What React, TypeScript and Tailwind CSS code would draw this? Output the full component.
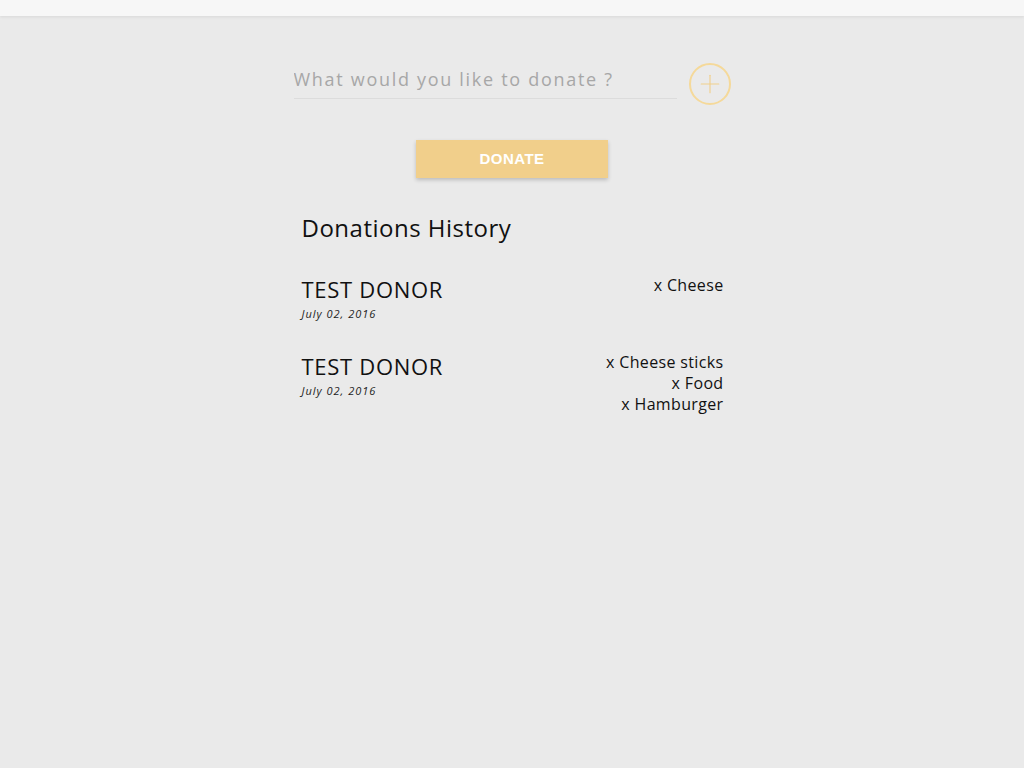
import { Plus } from 'lucide-react';

interface Donation {
    donor: string;
    date: string;
    items: string[];
}

const donations: Donation[] = [
    { donor: 'TEST DONOR', date: 'July 02, 2016', items: ['Cheese'] },
    { donor: 'TEST DONOR', date: 'July 02, 2016', items: ['Cheese sticks', 'Food', 'Hamburger'] },
];

export default function App() {
    return (
        <div className="min-h-[768px] bg-[#eaeaea] font-['Open_Sans',sans-serif] text-[#111]">
            {/* barra superior */}
            <div className="h-[16px] bg-[#f7f7f7] shadow-[0_1px_3px_rgba(0,0,0,0.08)]" />

            <div className="mx-auto w-[437px] pt-[47px]">
                <div className="flex items-center gap-[12px]">
                    <input
                        type="text"
                        placeholder="What would you like to donate ?"
                        className="w-[384px] h-[38px] pb-[2px] bg-transparent border-b border-[#dcdcdc] text-[18px] tracking-[1.7px] text-[#555] placeholder:text-[#a7a7a7] outline-none mt-[-8px]"
                    />
                    <button
                        className="w-[42px] h-[42px] rounded-full border-2 border-[#f5d99a] flex items-center justify-center text-[#f0cf8b]"
                        aria-label="Agregar"
                    >
                        <Plus size={30} strokeWidth={0.9} />
                    </button>
                </div>

                <div className="flex justify-center pt-[35px]">
                    <button className="w-[192px] h-[38px] bg-[#f1cf8b] text-white text-[15px] font-bold tracking-[0.5px] shadow-[0_2px_4px_rgba(0,0,0,0.2)] font-['Liberation_Sans',sans-serif]">
                        DONATE
                    </button>
                </div>

                <div className="px-[8px]">
                    <h2 className="text-[24px] pt-[35px] leading-[30px] tracking-[0.5px]">Donations History</h2>

                    <div className="pt-[34px] flex flex-col gap-[33px]">
                        {donations.map((d, i) => (
                            <div key={i} className="flex justify-between">
                                <div>
                                    <p className="text-[22px] leading-[24px] tracking-[0.7px]">{d.donor}</p>
                                    <p className="mt-[6px] text-[11px] italic tracking-[1px] leading-[14px] text-[#222]">{d.date}</p>
                                </div>
                                <div className="text-right text-[16px] leading-[21px] tracking-[0.35px] mt-[-2px] pr-[-1px] mr-[-1px]">
                                    {d.items.map((item) => (
                                        <p key={item}>x {item}</p>
                                    ))}
                                </div>
                            </div>
                        ))}
                    </div>
                </div>
            </div>
        </div>
    );
}
